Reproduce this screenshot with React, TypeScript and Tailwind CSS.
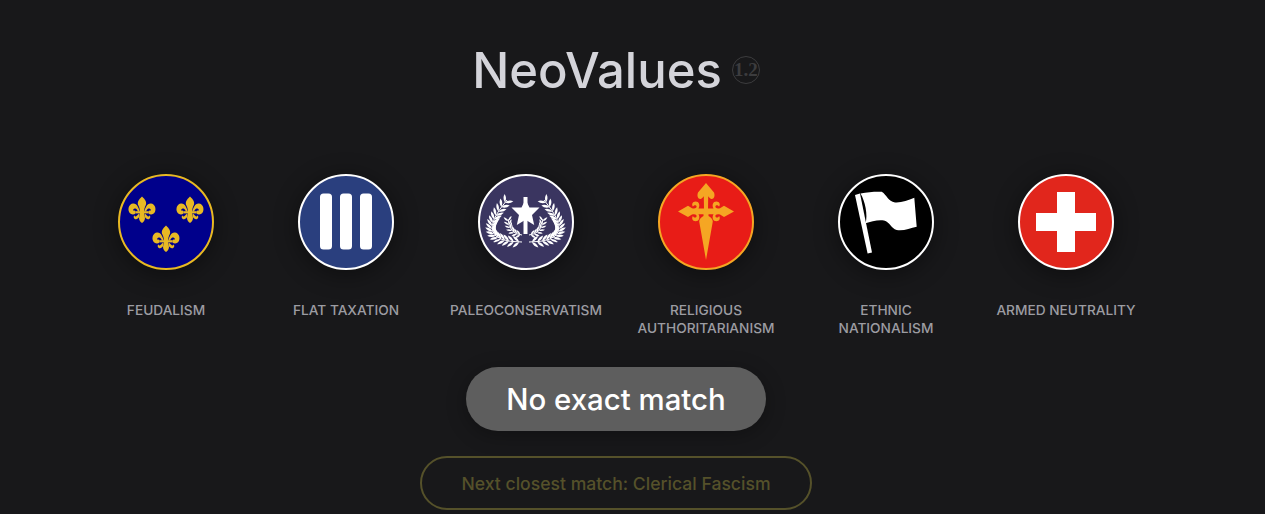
import { type ReactNode } from "react";

const FONT = "font-['Inter','Noto_Sans',sans-serif]";

function Fleur({ x, y }: { x: number; y: number }) {
  return (
    <g transform={`translate(${x} ${y})`} fill="#e8b923">
      {/* center petal */}
      <path d="M0,-13.5 C3.4,-10.5 5.2,-7.5 3.6,-4.5 C2.6,-2.4 2,0 2,2 L-2,2 C-2,0 -2.6,-2.4 -3.6,-4.5 C-5.2,-7.5 -3.4,-10.5 0,-13.5Z" />
      {/* side petals */}
      <path d="M2.2,1.5 C3.4,-2 5,-6.8 9,-6.4 C12.8,-6 14.4,-1.4 13,1.8 C11.8,4.6 8.2,5.4 6.6,3.4 C5.6,1.8 7,-0.2 8.6,0.8 C9.4,-0.8 7.6,-2.4 6,-1.2 C4.6,-0.2 4.4,1 4.2,1.5Z" />
      <path d="M-2.2,1.5 C-3.4,-2 -5,-6.8 -9,-6.4 C-12.8,-6 -14.4,-1.4 -13,1.8 C-11.8,4.6 -8.2,5.4 -6.6,3.4 C-5.6,1.8 -7,-0.2 -8.6,0.8 C-9.4,-0.8 -7.6,-2.4 -6,-1.2 C-4.6,-0.2 -4.4,1 -4.2,1.5Z" />
      {/* band */}
      <rect x="-6.5" y="1.2" width="13" height="2.2" />
      {/* foot */}
      <path d="M-2,3 L2,3 L3,8 C3,10.5 1.2,12.5 0,13 C-1.2,12.5 -3,10.5 -3,8Z" />
      <path d="M2.6,3.4 C4,4 4.4,5.4 5.8,6.2 C6.8,6.8 7.8,6 7.4,5.2 C9,6.4 8.4,9.4 5.8,9.2 C4,9 3,7.6 2.6,6Z" />
      <path d="M-2.6,3.4 C-4,4 -4.4,5.4 -5.8,6.2 C-6.8,6.8 -7.8,6 -7.4,5.2 C-9,6.4 -8.4,9.4 -5.8,9.2 C-4,9 -3,7.6 -2.6,6Z" />
    </g>
  );
}

// one laurel branch, drawn on the right hand side and mirrored for the left
function Branch({ p0, p1, p2, count, size }: { p0: number[]; p1: number[]; p2: number[]; count: number; size: number }) {
  const leaves: ReactNode[] = [];
  for (let i = 0; i < count; i++) {
    const t = (i + 0.5) / count;
    const x = (1 - t) * (1 - t) * p0[0] + 2 * t * (1 - t) * p1[0] + t * t * p2[0];
    const y = (1 - t) * (1 - t) * p0[1] + 2 * t * (1 - t) * p1[1] + t * t * p2[1];
    const dx = 2 * (1 - t) * (p1[0] - p0[0]) + 2 * t * (p2[0] - p1[0]);
    const dy = 2 * (1 - t) * (p1[1] - p0[1]) + 2 * t * (p2[1] - p1[1]);
    const a = (Math.atan2(dy, dx) * 180) / Math.PI;
    [-42, 42].forEach((off) => {
      leaves.push(
        <path
          key={`${i}${off}`}
          transform={`translate(${x} ${y}) rotate(${a + off})`}
          d={`M0,0 Q${size * 0.5},${-size * 0.3} ${size},0 Q${size * 0.5},${size * 0.3} 0,0Z`}
        />
      );
    });
  }
  return (
    <g fill="#fff">
      <path d={`M${p0[0]},${p0[1]} Q${p1[0]},${p1[1]} ${p2[0]},${p2[1]}`} fill="none" stroke="#fff" strokeWidth="1" />
      {leaves}
    </g>
  );
}

function Wreath() {
  const side = (
    <>
      <Branch p0={[51, 68]} p1={[102, 68]} p2={[66, 26]} count={17} size={8.5} />
      <Branch p0={[51, 61]} p1={[64, 60]} p2={[65, 45]} count={7} size={6} />
    </>
  );
  return (
    <>
      {side}
      <g transform="matrix(-1 0 0 1 95 0)">{side}</g>
      <rect x="45.5" y="23" width="4" height="37" fill="#fff" />
      <path
        d="M47.5,25.5 L51.5,33.5 L61.5,33.5 L54,41 L56.2,51 L47.5,45.8 L38.8,51 L41,41 L33.5,33.5 L43.5,33.5Z"
        fill="#fff"
      />
    </>
  );
}

function SantiagoCross() {
  const arm = (
    <path d="M48,34.6 L55.5,34.6 C53.6,31 55,27.6 58.4,27.6 C61.4,27.6 62.8,30.6 61,32.8 C60.4,30.8 57.6,30.8 57.4,32.6 C57.2,34 59,35 62,34.2 L66,31.8 L76,37.4 L66,43 L62,40.6 C59,39.8 57.2,40.8 57.4,42.2 C57.6,44 60.4,44 61,42 C62.8,44.2 61.4,47.2 58.4,47.2 C55,47.2 53.6,43.8 55.5,40.2 L48,40.2Z" />
  );
  return (
    <g fill="#f5a623">
      {arm}
      <g transform="matrix(-1 0 0 1 96 0)">{arm}</g>
      {/* top fleur */}
      <path d="M48,9 L56,18.6 C57.4,22.4 55.8,25.4 53.4,25 C51.8,24.6 51,23 50.2,22.2 L50,36 L46,36 L45.8,22.2 C45,23 44.2,24.6 42.6,25 C40.2,25.4 38.6,22.4 40,18.6Z" />
      {/* blade */}
      <path d="M45.5,38 L50.5,38 L50.5,42 C52.6,43.4 54.8,45 54.8,47.5 L48,86 L41.2,47.5 C41.2,45 43.4,43.4 45.5,42Z" />
    </g>
  );
}

const emblems: { label: string; bg: string; ring: string; art: ReactNode }[] = [
  {
    label: "Feudalism",
    bg: "#00008b",
    ring: "#e8b923",
    art: (
      <>
        <Fleur x={24} y={36} />
        <Fleur x={72} y={36} />
        <Fleur x={48} y={65} />
      </>
    ),
  },
  {
    label: "Flat Taxation",
    bg: "#2a3f7e",
    ring: "#ffffff",
    art: (
      <g fill="#fff">
        <rect x="22" y="19.5" width="12" height="56" rx="3.5" />
        <rect x="42" y="19.5" width="12" height="56" rx="3.5" />
        <rect x="62" y="19.5" width="12" height="56" rx="3.5" />
      </g>
    ),
  },
  { label: "Paleoconservatism", bg: "#3a3560", ring: "#ffffff", art: <Wreath /> },
  { label: "Religious\nAuthoritarianism", bg: "#e81c17", ring: "#f5a623", art: <SantiagoCross /> },
  {
    label: "Ethnic\nNationalism",
    bg: "#000000",
    ring: "#ffffff",
    art: (
      <g fill="#fff">
        <path d="M17,21 L22,19.6 L34,78.6 L29.6,79.6Z" />
        <path d="M22.5,19.5 C30,18 37,17.4 43.7,17.7 C49,21 50,27.5 57,28.4 C63,29 70,26 76.3,23.7 L78.7,52.7 C72,54 65,57.5 58.7,56 C53,54.5 52,48 46,46.5 C40,45.5 33,47.5 27.5,49.3 C30,41 27,27 22.5,19.5Z" />
      </g>
    ),
  },
  {
    label: "Armed Neutrality",
    bg: "#e1261c",
    ring: "#ffffff",
    art: <path d="M39,18 L57,18 L57,39 L78,39 L78,57 L57,57 L57,78 L39,78 L39,57 L18,57 L18,39 L39,39Z" fill="#fff" />,
  },
];

function Emblem({ label, bg, ring, art }: (typeof emblems)[number]) {
  return (
    <div className="flex w-[180px] flex-col items-center">
      <div className="h-24 w-24 rounded-full shadow-[0_4px_24px_rgba(0,0,0,0.45)]">
        <svg viewBox="0 0 96 96" className="h-24 w-24">
          <circle cx="48" cy="48" r="47" fill={bg} stroke={ring} strokeWidth="2" />
          {art}
        </svg>
      </div>
      <p className="mt-[31px] w-[170px] text-center text-[13.7px] leading-[18px] font-medium whitespace-pre-line text-[#9c9ca2] uppercase">
        {label}
      </p>
    </div>
  );
}

export default function App() {
  return (
    <div className={`h-[514px] w-full overflow-hidden bg-[#18181a] ${FONT}`}>
      <div className="flex w-[1232px] flex-col items-center">
        <div className="mt-[40px] flex h-[62px] items-center">
          <h1 className="text-[49px] leading-[62px] font-medium text-[#d4d4da]">NeoValues</h1>
          <span className="mb-[2px] ml-[10px] flex h-7 w-7 items-center justify-center rounded-full border border-[#3c3c3e] font-['Liberation_Serif',serif] text-[19px] font-bold text-[#3c3c3e]">
            1.2
          </span>
        </div>
        <div className="mt-[72px] flex h-[165px] w-[1080px] items-start">
          {emblems.map((e) => (
            <Emblem key={e.label} {...e} />
          ))}
        </div>
        <div className="mt-[28px] flex h-16 w-[300px] items-center justify-center rounded-full bg-[#5e5e5e] pt-[2px] text-[29.4px] font-medium text-white shadow-[0_4px_20px_rgba(0,0,0,0.3)]">
          No exact match
        </div>
        <div className="mt-[25px] flex h-[54px] w-[392px] items-center justify-center rounded-full border-2 border-[#55512a] pt-[3px] text-[17.6px] font-medium text-[#55512a]">
          Next closest match: Clerical Fascism
        </div>
      </div>
    </div>
  );
}
